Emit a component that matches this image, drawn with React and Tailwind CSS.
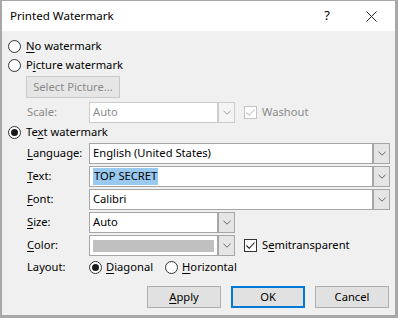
import React from "react";

const font = { fontFamily: '"Noto Sans", "Open Sans", sans-serif' };

function U({ children }) {
  return <span className="underline underline-offset-2 decoration-1">{children}</span>;
}

function Radio({ checked }) {
  return (
    <span className="w-[13px] h-[13px] rounded-full border border-[#333] bg-white flex items-center justify-center shrink-0">
      {checked && <span className="w-[7px] h-[7px] rounded-full bg-[#1a1a1a]" />}
    </span>
  );
}

function Check({ checked, disabled }) {
  return (
    <span
      className={
        "w-[13px] h-[13px] border bg-white flex items-center justify-center shrink-0 " +
        (disabled ? "border-[#c4c4c4]" : "border-[#333]")
      }
    >
      {checked && (
        <svg width="11" height="11" viewBox="0 0 11 11">
          <path d="M1.5 5.5 L4.2 8.3 L9.6 2.5" fill="none" stroke={disabled ? "#c4c4c4" : "#1a1a1a"} strokeWidth="1.1" />
        </svg>
      )}
    </span>
  );
}

function Chevron({ color = "#666" }) {
  return (
    <svg width="8" height="5" viewBox="0 0 8 5">
      <path d="M0.5 0.8 L4 4.2 L7.5 0.8" fill="none" stroke={color} strokeWidth="1" />
    </svg>
  );
}

function Combo({ width, disabled, children }) {
  return (
    <div
      className={
        "h-[21px] flex border " +
        (disabled ? "border-[#cccccc] bg-white" : "border-[#a6a6a6] bg-white") +
        " " + width
      }
    >
      <div className={"flex-1 flex items-center pl-[3px] overflow-hidden " + (disabled ? "text-[#8d8d8d]" : "text-black")}>
        {children}
      </div>
      <div
        className={
          "w-[17px] flex items-center justify-center border-l-2 " +
          (disabled ? "border-[#cccccc] bg-[#f4f4f4]" : "border-[#a6a6a6] bg-[#e5e5e5]")
        }
      >
        <Chevron color={disabled ? "#a0a0a0" : "#666"} />
      </div>
    </div>
  );
}

function FieldRow({ label, children }) {
  return (
    <div className="flex items-center mt-[2px] h-[21px]">
      <span className="w-[62px] pl-[19px] box-content">{label}</span>
      {children}
    </div>
  );
}

function Btn({ children, primary }) {
  return (
    <div
      className={
        "w-[74px] h-[22px] flex items-center justify-center bg-[#e1e1e1] " +
        (primary ? "border-2 border-[#0078d7]" : "border border-[#adadad]")
      }
    >
      {children}
    </div>
  );
}

export default function App() {
  return (
    <div
      className="w-[398px] h-[318px] bg-[#f0f0f0] border-t border-l-2 border-r-[3px] border-b-[3px] border-[#a8a8a8] text-[11.2px] text-black flex flex-col overflow-hidden"
      style={font}
    >
      {/* Title bar */}
      <div className="h-[30px] bg-white flex items-center pl-[8px] shrink-0 text-[11.6px]">
        <span className="flex-1">Printed Watermark</span>
        <span className="text-[13px] mr-[36px]">?</span>
        <svg width="11" height="11" viewBox="0 0 11 11" className="mr-[18px]">
          <path d="M0.5 0.5 L10.5 10.5 M10.5 0.5 L0.5 10.5" stroke="#222" strokeWidth="1" />
        </svg>
      </div>

      <div className="flex flex-col pl-[6px] pt-[6px]">
        <div className="flex items-center h-[19px] gap-[5px]">
          <Radio />
          <span><U>N</U>o watermark</span>
        </div>
        <div className="flex items-center h-[19px] gap-[5px]">
          <Radio />
          <span>P<U>i</U>cture watermark</span>
        </div>
        <div className="ml-[18px] mt-[1px] w-[94px] h-[22px] border border-[#c9c9c9] bg-[#e6e6e6] flex items-center justify-center text-[#8a8a8a]">
          Select Picture...
        </div>
        <div className="flex items-center mt-[4px] h-[21px]">
          <span className="w-[62px] pl-[19px] box-content text-[#8a8a8a]">Scale:</span>
          <Combo width="w-[146px]" disabled>Auto</Combo>
          <span className="ml-[9px] flex items-center gap-[5px] text-[#8a8a8a]">
            <Check checked disabled />
            Washout
          </span>
        </div>
        <div className="flex items-center h-[19px] gap-[5px]">
          <Radio checked />
          <span>Te<U>x</U>t watermark</span>
        </div>
        <div className="flex items-center mt-[1px] h-[21px]">
          <span className="w-[62px] pl-[19px] box-content"><U>L</U>anguage:</span>
          <Combo width="w-[301px]">English (United States)</Combo>
        </div>
        <FieldRow label={<><U>T</U>ext:</>}>
          <Combo width="w-[301px]">
            <span className="bg-[#99c9ef] px-[1px]">TOP SECRET</span>
          </Combo>
        </FieldRow>
        <FieldRow label={<><U>F</U>ont:</>}>
          <Combo width="w-[301px]">Calibri</Combo>
        </FieldRow>
        <FieldRow label={<><U>S</U>ize:</>}>
          <Combo width="w-[146px]">Auto</Combo>
        </FieldRow>
        <FieldRow label={<><U>C</U>olor:</>}>
          <Combo width="w-[146px]">
            <span className="w-[121px] h-[12px] bg-[#c0c0c0]" />
          </Combo>
          <span className="ml-[9px] flex items-center gap-[5px]">
            <Check checked />
            <span>S<U>e</U>mitransparent</span>
          </span>
        </FieldRow>
        <div className="flex items-center mt-[2px] h-[19px]">
          <span className="w-[62px] pl-[19px] box-content">Layout:</span>
          <span className="flex items-center gap-[4px]">
            <Radio checked />
            <span><U>D</U>iagonal</span>
          </span>
          <span className="flex items-center gap-[4px] ml-[12px]">
            <Radio />
            <span><U>H</U>orizontal</span>
          </span>
        </div>
        <div className="flex justify-end gap-[10px] mt-[9px] pr-[6px]">
          <Btn><span><U>A</U>pply</span></Btn>
          <Btn primary>OK</Btn>
          <Btn>Cancel</Btn>
        </div>
      </div>
    </div>
  );
}
